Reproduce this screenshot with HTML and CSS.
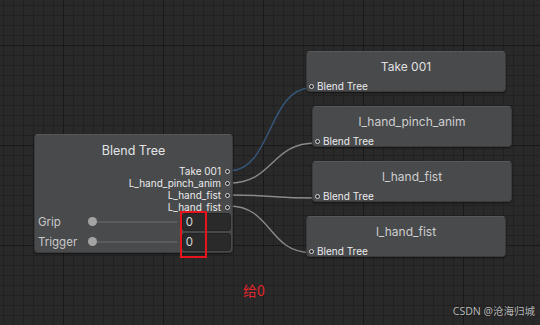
FILE: index.html
```html
<!DOCTYPE html>
<html>
<head>
<meta charset="utf-8">
<link rel="stylesheet" href="styles.css">
</head>
<body>
<div class="canvas">
  <svg class="wires" width="540" height="325" viewBox="0 0 540 325">
    <path d="M229 171 C 272 171, 268 88, 311 88" class="wire blue"/>
    <path d="M229 183 C 274 183, 270 143, 316 143" class="wire"/>
    <path d="M229 195 C 274 195, 270 198, 316 198" class="wire"/>
    <path d="M229 206 C 272 206, 268 252.5, 311 252.5" class="wire"/>
  </svg>

  <div class="node tree">
    <div class="title">Blend Tree</div>
    <div class="outputs">
      <div class="out-row"><span>Take 001</span><i class="dot"></i></div>
      <div class="out-row"><span>L_hand_pinch_anim</span><i class="dot"></i></div>
      <div class="out-row"><span>L_hand_fist</span><i class="dot"></i></div>
      <div class="out-row"><span>L_hand_fist</span><i class="dot"></i></div>
    </div>
    <div class="params">
      <div class="param">
        <span class="pname">Grip</span>
        <div class="slider"><span class="knob"></span></div>
        <div class="num">0</div>
      </div>
      <div class="param">
        <span class="pname">Trigger</span>
        <div class="slider"><span class="knob"></span></div>
        <div class="num">0</div>
      </div>
    </div>
  </div>

  <div class="node clip n1">
    <div class="ctitle">Take 001</div>
    <div class="in-row"><i class="dot"></i><span>Blend Tree</span></div>
  </div>
  <div class="node clip n2">
    <div class="ctitle">l_hand_pinch_anim</div>
    <div class="in-row"><i class="dot"></i><span>Blend Tree</span></div>
  </div>
  <div class="node clip n3">
    <div class="ctitle">l_hand_fist</div>
    <div class="in-row"><i class="dot"></i><span>Blend Tree</span></div>
  </div>
  <div class="node clip n4">
    <div class="ctitle">l_hand_fist</div>
    <div class="in-row"><i class="dot"></i><span>Blend Tree</span></div>
  </div>

  <div class="mark"></div>
  <div class="note">给0</div>
  <div class="watermark">CSDN @沧海归城</div>
</div>
</body>
</html>
```

FILE: styles.css
```css
html, body {
  margin: 0;
  padding: 0;
  background: #282828;
}
body {
  width: 540px;
  height: 325px;
  overflow: hidden;
  font-family: Inter, "Noto Sans", "Noto Sans CJK SC", sans-serif;
}
.canvas {
  position: relative;
  width: 540px;
  height: 325px;
  background-color: #292929;
  background-image:
    linear-gradient(to right, #191919 1px, transparent 1px),
    linear-gradient(to bottom, #191919 1px, transparent 1px),
    linear-gradient(to right, #212121 1px, transparent 1px),
    linear-gradient(to bottom, #212121 1px, transparent 1px);
  background-size: 100px 100px, 100px 100px, 10px 10px, 10px 10px;
  background-position: 63px 0, 0 45px, 3px 0, 0 5px;
}
.wires {
  position: absolute;
  left: 0;
  top: 0;
}
.wire {
  fill: none;
  stroke: #8a8a8a;
  stroke-width: 1.4;
}
.wire.blue {
  stroke: #36577c;
}
.node {
  position: absolute;
  box-sizing: border-box;
  background: #484a4c;
  border: 1px solid #3a3b3d;
  border-top-color: #56585a;
  border-radius: 4px;
  box-shadow: 0 1px 2px rgba(0,0,0,0.55);
  color: #e2e2e2;
}
.tree {
  left: 34px;
  top: 134px;
  width: 199px;
  height: 119px;
  display: flex;
  flex-direction: column;
}
.title {
  height: 30px;
  display: flex;
  align-items: center;
  justify-content: center;
  font-size: 12.5px;
  color: #e4e4e4;
}
.outputs {
  display: flex;
  flex-direction: column;
  padding-right: 2px;
  padding-top: 1px;
}
.out-row {
  height: 11.8px;
  display: flex;
  align-items: center;
  justify-content: flex-end;
  gap: 4px;
  font-size: 10px;
  line-height: 11px;
  color: #ebebeb;
}
.dot {
  display: block;
  width: 3px;
  height: 3px;
  border-radius: 50%;
  border: 1px solid #d8d8d8;
  background: #2a2a2a;
  flex: none;
}
.params {
  display: flex;
  flex-direction: column;
  gap: 2px;
  padding: 0 1px 0 3px;
}
.param {
  height: 18px;
  display: flex;
  align-items: center;
}
.pname {
  width: 50px;
  font-size: 11.5px;
  color: #c9c9c9;
}
.slider {
  position: relative;
  width: 86px;
  height: 2px;
  background: #5c5c5c;
  margin-left: 5px;
  margin-right: 5px;
}
.knob {
  position: absolute;
  left: -4px;
  top: -4px;
  width: 9px;
  height: 9px;
  border-radius: 50%;
  background: #a4a4a4;
}
.num {
  box-sizing: border-box;
  width: 50px;
  height: 18px;
  background: #2a2a2a;
  border: 1px solid #232323;
  border-radius: 3px;
  font-size: 11.5px;
  color: #d8d8d8;
  padding-left: 3px;
  display: flex;
  align-items: center;
}
.clip {
  width: 200px;
  height: 41px;
  display: flex;
  flex-direction: column;
}
.n1 { left: 306px; top: 51px; }
.n2 { left: 312px; top: 106px; }
.n3 { left: 312px; top: 161px; }
.n4 { left: 306px; top: 216px; }
.ctitle {
  height: 28px;
  display: flex;
  align-items: center;
  justify-content: center;
  font-size: 12px;
  color: #cfcfcf;
}
.n1 .ctitle { color: #e0e0e0; }
.in-row {
  margin-top: auto;
  margin-bottom: 1px;
  display: flex;
  align-items: center;
  gap: 3px;
  padding-left: 2px;
  height: 8px;
  font-size: 10px;
  color: #ececec;
}
.mark {
  position: absolute;
  left: 180px;
  top: 211px;
  width: 23px;
  height: 43px;
  border: 2px solid #e8141c;
}
.note {
  position: absolute;
  left: 243px;
  top: 280px;
  font-size: 14px;
  line-height: 20px;
  color: #e3262b;
  font-family: "Noto Sans CJK SC", sans-serif;
}
.watermark {
  position: absolute;
  right: 5px;
  top: 303px;
  font-size: 10.5px;
  line-height: 16px;
  color: #b8b8b8;
  font-family: "Noto Sans", "Noto Sans CJK SC", sans-serif;
  text-shadow: 0 0 1px rgba(0,0,0,0.6);
}
```
